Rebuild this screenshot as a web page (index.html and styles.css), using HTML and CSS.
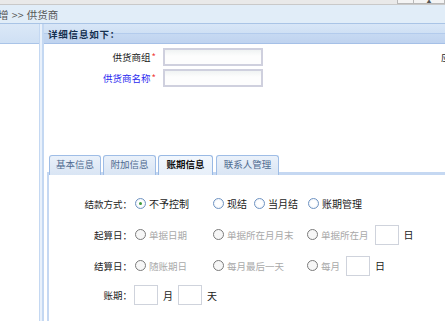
FILE: index.html
```html
<!DOCTYPE html>
<html>
<head>
<meta charset="utf-8">
<link rel="stylesheet" href="styles.css">
</head>
<body>
<div class="topstrip"><div class="topbox"><span class="tb-a"></span><span class="tb-b">▲</span></div></div>
<div class="crumb"><span class="crumb-text">增 &gt;&gt; 供货商</span></div>
<div class="main">
  <div class="left">
    <div class="left-hdr"></div>
  </div>
  <div class="divider"></div>
  <div class="right">
    <div class="hdr"><span class="hdr-text">详细信息如下：</span></div>
    <div class="form">
      <div class="frow">
        <div class="flabel">供货商组<span class="star">*</span></div>
        <div class="finput"></div>
        <div class="fextra">应</div>
      </div>
      <div class="frow">
        <div class="flabel blue">供货商名称<span class="star">*</span></div>
        <div class="finput"></div>
      </div>
    </div>
    <div class="tabbox">
      <div class="tabs">
        <div class="tab t1">基本信息</div>
        <div class="tab t2">附加信息</div>
        <div class="tab t3 active">账期信息</div>
        <div class="tab t4">联系人管理</div>
      </div>
      <div class="panel">
        <div class="prow r1">
          <div class="plabel">结款方式：</div>
          <div class="pcol c1"><span class="radio checked"></span><span class="opt">不予控制</span></div>
          <div class="pcol c2"><span class="radio"></span><span class="opt">现结</span><span class="radio sp"></span><span class="opt">当月结</span></div>
          <div class="pcol c3"><span class="radio r1c3"></span><span class="opt">账期管理</span></div>
        </div>
        <div class="prow r2">
          <div class="plabel">起算日：</div>
          <div class="pcol c1"><span class="radio dis"></span><span class="opt gray">单据日期</span></div>
          <div class="pcol c2"><span class="radio dis"></span><span class="opt gray">单据所在月月末</span></div>
          <div class="pcol c3"><span class="radio dis"></span><span class="opt gray">单据所在月</span><span class="sbox"></span><span class="unit">日</span></div>
        </div>
        <div class="prow r3">
          <div class="plabel">结算日：</div>
          <div class="pcol c1"><span class="radio dis"></span><span class="opt gray">随账期日</span></div>
          <div class="pcol c2"><span class="radio dis"></span><span class="opt gray">每月最后一天</span></div>
          <div class="pcol c3"><span class="radio dis"></span><span class="opt gray">每月</span><span class="sbox"></span><span class="unit">日</span></div>
        </div>
        <div class="prow r4">
          <div class="plabel">账期：</div>
          <div class="pcol c4"><span class="sbox first"></span><span class="unit">月</span><span class="sbox w3"></span><span class="unit">天</span></div>
        </div>
      </div>
    </div>
  </div>
</div>
</body>
</html>
```
FILE: styles.css
```css
* { box-sizing: border-box; }
html, body { margin: 0; padding: 0; }
body {
  width: 445px;
  height: 321px;
  overflow: hidden;
  background: #fff;
  font-family: "Noto Sans CJK SC", "Liberation Sans", sans-serif;
  font-size: 9.5px;
  color: #222;
}
.topstrip {
  height: 5px;
  background: #e9e9e9;
  border-bottom: 1px solid #c9c9c9;
  display: flex;
  justify-content: flex-end;
}
.topbox {
  width: 48px;
  height: 4px;
  display: flex;
  border: 1px solid #b9b9b9;
  border-top: none;
  background: #f4f4f4;
}
.tb-a { width: 16px; border-right: 1px solid #b9b9b9; }
.tb-b { flex: 1; font-size: 6px; line-height: 4px; color: #555; text-align: center; overflow: hidden; }
.crumb {
  height: 19px;
  background: #e1edf8;
  border-bottom: 1px solid #a9c4e6;
  display: flex;
  align-items: center;
  overflow: hidden;
}
.crumb-text { margin-left: -2px; color: #555; white-space: nowrap; font-size: 10.5px; word-spacing: 1px; }
.main { display: flex; height: 297px; }
.left { width: 39px; flex: none; }
.left-hdr {
  height: 20px;
  background: linear-gradient(#dbe8f7, #cfe0f4);
  border-bottom: 1px solid #a9c4e8;
}
.divider {
  width: 5px;
  flex: none;
  background: linear-gradient(90deg, #c4d8f2 0, #c4d8f2 1px, #e9f1fb 1px, #e9f1fb 3px, #c4d8f2 3px, #c4d8f2 5px);
}
.right { flex: 1; min-width: 0; }
.hdr {
  height: 20px;
  background: linear-gradient(#d8e6f7 0, #cfe0f4 9px, #b3cbec 9px, #b3cbec 10px, #c6d9f2 10px, #bfd3ef 19px, #a5c0e7 19px);
  display: flex;
  align-items: center;
  padding-left: 4px;
}
.hdr-text { font-weight: bold; color: #15304f; font-size: 9.5px; letter-spacing: 0.8px; }
.form { padding-top: 4px; display: flex; flex-direction: column; gap: 3px; }
.frow { display: flex; align-items: center; height: 18px; }
.flabel { width: 112px; flex: none; text-align: right; white-space: nowrap; color: #222; }
.flabel.blue { color: #2b2bf0; }
.star { color: #f03a3a; margin-left: 1px; }
.finput {
  flex: none;
  margin-left: 7px;
  width: 100px;
  height: 18px;
  border: 2px solid #cfd0de;
  background: linear-gradient(#f0f3f3, #fdfdfd 6px);
}
.fextra { flex: none; margin-left: 178px; white-space: nowrap; color: #222; }
.tabbox { margin-top: 68px; margin-left: 3px; }
.tabs {
  display: flex;
  align-items: flex-end;
  height: 20px;
  padding-left: 2px;
  gap: 2px;
  border-bottom: 3px solid #c5d8f2;
}
.tab {
  flex: none;
  border: 1px solid #9fbde6;
  border-bottom: none;
  border-radius: 3px 3px 0 0;
  background: linear-gradient(#eaf1fa, #d9e5f4);
  color: #4f6a8f;
  display: flex;
  align-items: center;
  justify-content: center;
  margin-bottom: -3px;
  height: 20px;
  padding-bottom: 3px;
}
.t1 { width: 52px; }
.t2 { width: 53px; }
.t3 { width: 55px; }
.t4 { width: 63px; margin-left: 1px; }
.tab.active {
  background: linear-gradient(#f2f7fd, #e7eff9);
  color: #111;
  font-weight: bold;
  border-color: #99b9e4;
}
.panel {
  border-left: 2px solid #c5d8f2;
  padding-top: 13px;
  height: 160px;
  font-size: 10px;
}
.prow { display: flex; align-items: center; height: 31px; }
.prow.r4 { height: 28px; }
.plabel { width: 83px; flex: none; text-align: right; white-space: nowrap; color: #222; font-size: 9.5px; }
.pcol { display: flex; align-items: center; white-space: nowrap; flex: none; }
.c1 { margin-left: 3px; width: 78px; }
.c2 { width: 94px; }
.c3 { flex: 1; }
.c4 { margin-left: 2px; }
.radio {
  width: 11px;
  height: 11px;
  border-radius: 50%;
  border: 1px solid #6f93c2;
  background: radial-gradient(circle, #ffffff 40%, #e4ecf5 100%);
  flex: none;
  position: relative;
}
.radio.checked::after {
  content: "";
  position: absolute;
  left: 3px; top: 3px;
  width: 3px; height: 3px;
  border-radius: 50%;
  background: #3e9a3e;
}
.radio.sp { margin-left: 7px; }
.radio.r1c3 { margin-left: 1px; }
.radio.dis {
  border: 1.5px solid #7b7b7b;
  background: #f7f7f7;
}
.opt { margin-left: 3px; color: #1a1a1a; }
.opt.gray { color: #a9a9a9; font-size: 9.5px; }
.sbox {
  width: 24px;
  height: 20px;
  border: 1px solid #cfd3dc;
  background: #fff;
  margin-left: 6px;
  flex: none;
}
.sbox.first { margin-left: 0; }
.sbox.w3 { margin-left: 5px; }
.unit { margin-left: 5px; color: #1a1a1a; }
```
